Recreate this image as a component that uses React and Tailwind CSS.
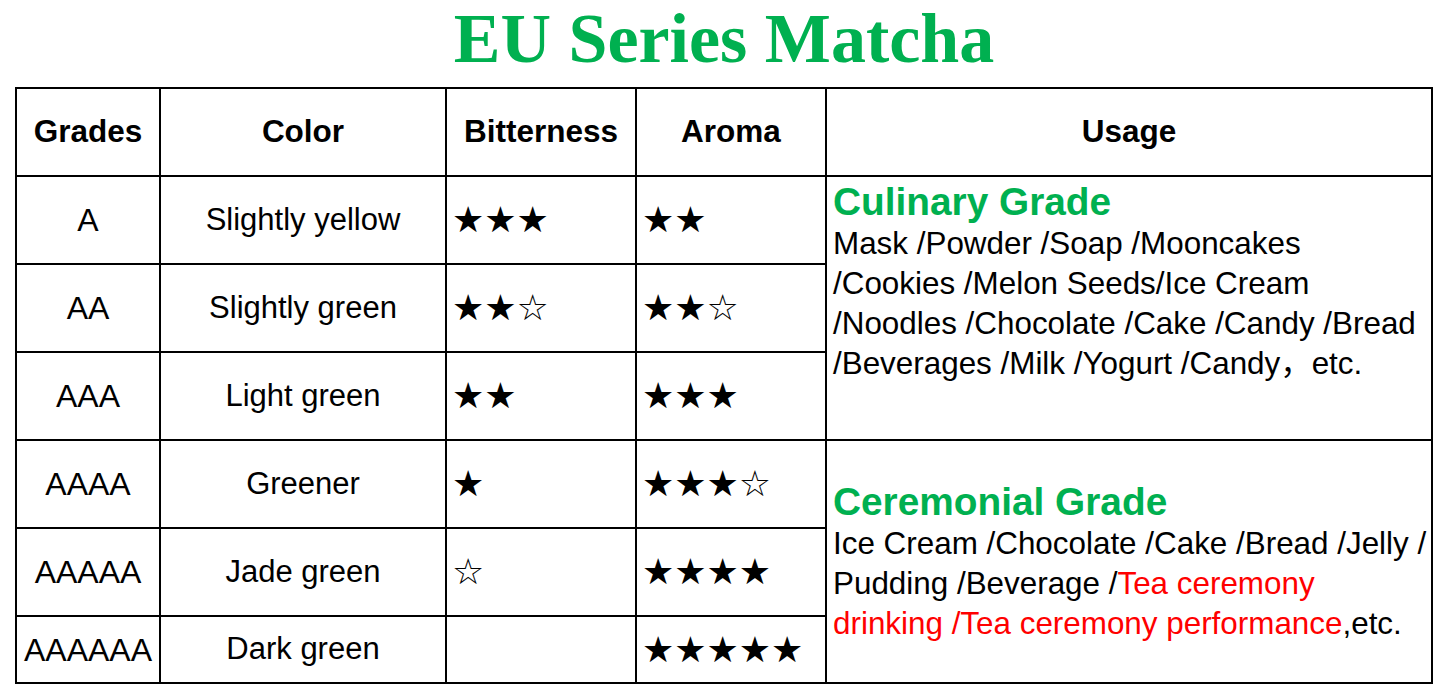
import React from 'react';

const rows = [
  { grade: 'A', color: 'Slightly yellow', bitter: '★★★', aroma: '★★' },
  { grade: 'AA', color: 'Slightly green', bitter: '★★☆', aroma: '★★☆' },
  { grade: 'AAA', color: 'Light green', bitter: '★★', aroma: '★★★' },
  { grade: 'AAAA', color: 'Greener', bitter: '★', aroma: '★★★☆' },
  { grade: 'AAAAA', color: 'Jade green', bitter: '☆', aroma: '★★★★' },
  { grade: 'AAAAAA', color: 'Dark green', bitter: '', aroma: '★★★★★' },
];

const cell = 'border-2 border-black p-0';
const stars = "text-left pl-[5px] text-[36px] tracking-[0px] font-['DejaVu_Sans',sans-serif]";

export default function App() {
  return (
    <div className="w-[1448px] h-[697px] bg-white text-black font-['Liberation_Sans',Arial,'Noto_Sans_CJK_SC',sans-serif]">
      {/* Title */}
      <div className="h-[87px] pt-[4px] text-center leading-none text-[70px] font-bold text-[#00b050] font-['Liberation_Serif','Times_New_Roman',serif]">
        EU Series Matcha
      </div>

      <table className="ml-[15px] w-[1418px] table-fixed border-collapse border-2 border-black">
        <colgroup>
          <col className="w-[144px]" />
          <col className="w-[286px]" />
          <col className="w-[190px]" />
          <col className="w-[190px]" />
          <col className="w-[606px]" />
        </colgroup>
        <thead>
          <tr className="h-[88px] text-[31.5px] font-bold">
            <th className={cell}>Grades</th>
            <th className={cell}>Color</th>
            <th className={cell}>Bitterness</th>
            <th className={cell}>Aroma</th>
            <th className={cell}>Usage</th>
          </tr>
        </thead>
        <tbody>
          {rows.map((r, i) => (
            <tr key={r.grade} className={i === 5 ? 'h-[67px]' : 'h-[88px]'}>
              <td className={`${cell} text-center text-[32px] whitespace-nowrap`}>{r.grade}</td>
              <td className={`${cell} text-center text-[31px]`}>{r.color}</td>
              <td className={`${cell} ${stars}`}>{r.bitter}</td>
              <td className={`${cell} ${stars}`}>{r.aroma}</td>
              {i === 0 && (
                <td rowSpan={3} className={`${cell} align-top pl-[6px] pt-[5px]`}>
                  <div className="text-[38.8px] font-bold text-[#00b050] leading-[40px]">Culinary Grade</div>
                  <div className="text-[31.4px] leading-[40px] mt-[2px]">
                    Mask /Powder /Soap /Mooncakes
                    <br />
                    /Cookies /Melon Seeds/Ice Cream
                    <br />
                    /Noodles /Chocolate /Cake /Candy /Bread
                    <br />
                    /Beverages /Milk /Yogurt /Candy，etc.
                  </div>
                </td>
              )}
              {i === 3 && (
                <td rowSpan={3} className={`${cell} align-top pl-[6px] pt-[41px]`}>
                  <div className="text-[38.8px] font-bold text-[#00b050] leading-[40px]">Ceremonial Grade</div>
                  <div className="text-[31.4px] leading-[40px] mt-[2px]">
                    Ice Cream /Chocolate /Cake /Bread /Jelly /
                    <br />
                    Pudding /Beverage /<span className="text-[#ff0000]">Tea ceremony</span>
                    <br />
                    <span className="text-[#ff0000]">drinking /Tea ceremony performance</span>,etc.
                  </div>
                </td>
              )}
            </tr>
          ))}
        </tbody>
      </table>
    </div>
  );
}
